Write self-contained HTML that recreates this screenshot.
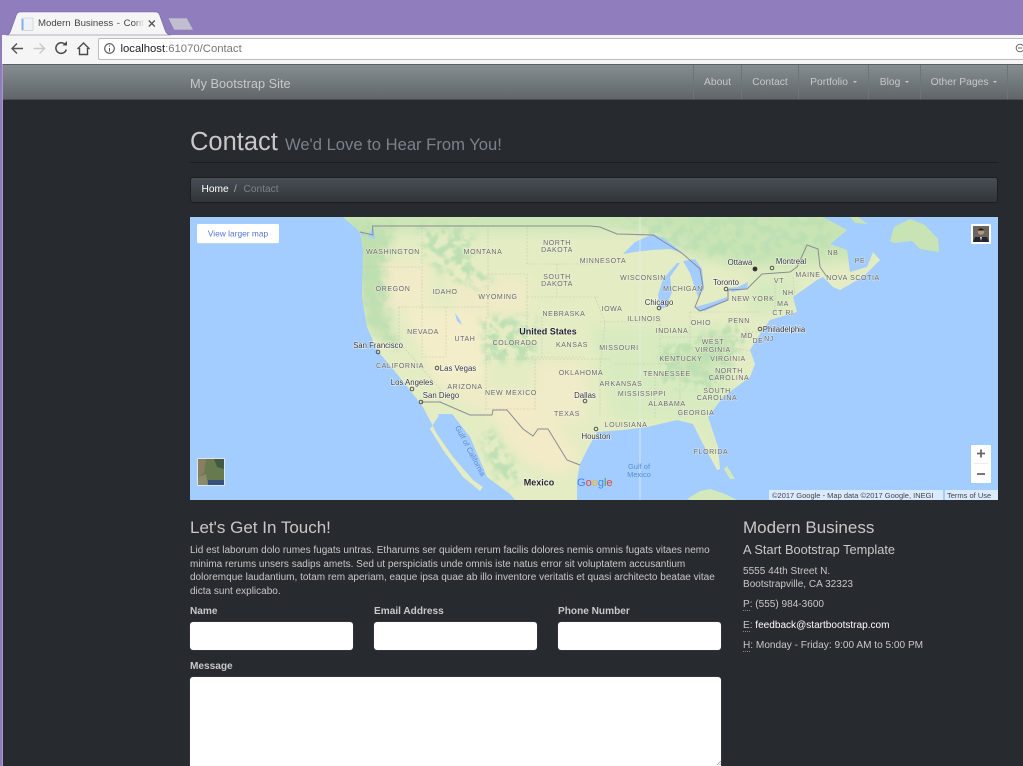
<!DOCTYPE html>
<html><head><meta charset="utf-8"><title>Modern Business - Contact</title>
<style>
html,body{margin:0;padding:0;width:1023px;height:766px;overflow:hidden;background:#272b30}
body{font-family:"Liberation Sans",Arial,sans-serif;position:relative}
#w{position:absolute;left:0;top:0;width:1023px;height:766px;overflow:hidden;filter:blur(.3px)}
.a{position:absolute;white-space:nowrap}
.l{color:#c8c8c8;font-size:10px;line-height:13.5px}
.lb{color:#c8c8c8;font-size:10.100px;font-weight:bold;line-height:13px}
.inp{position:absolute;background:#fff;border-radius:3px;box-sizing:border-box;box-shadow:0 0 0 .5px #3a3f44}
.nav{position:absolute;top:65px;height:34px;border-left:1px solid #6d7579;box-sizing:border-box;color:#c8c8c8;font-size:10.300px;line-height:35px;text-align:center}
.car{display:inline-block;width:0;height:0;border-left:2.2px solid transparent;border-right:2.2px solid transparent;border-top:2.2px solid #c8c8c8;margin-left:2px;vertical-align:middle}
abbr{text-decoration:none;border-bottom:1px dotted #888}
</style></head><body>
<div id="w">
<!-- browser frame -->
<div class="a" style="left:0;top:0;width:1023px;height:35px;background:#8f7dbd"></div>
<div class="a" style="left:0;top:35px;width:1023px;height:29px;background:#f5f5f5"></div>
<div class="a" style="left:0;top:35px;width:2px;height:731px;background:#8f7dbd"></div>
<div class="a" style="left:2px;top:64px;width:1px;height:702px;background:#a79ac8"></div>
<svg class="a" style="left:0;top:0" width="200" height="40">
<path d="M6 35 C9 35 10 33 11 30 L16 16 C17 13 18 12 21 12 L155 12 C158 12 159 13 160 16 L165 30 C166 33 168 35 171 35 Z" fill="#f5f5f5" stroke="#7667a5" stroke-width=".6"/>
<path d="M168 18 L187 18 L193.500 30 L174 30 Z" fill="#c3bdd0" stroke="#8a80a8" stroke-width=".6"/>
<rect x="22" y="18" width="11" height="12.500" fill="#eef1f5" stroke="#c8d0da" stroke-width=".7"/>
<rect x="21.500" y="19" width="2" height="11" fill="#7ab3e6"/>
<path d="M148.800 20.500 L154.800 26.500 M154.800 20.500 L148.800 26.500" stroke="#555" stroke-width="1.300"/>
</svg>
<div class="a" style="left:38px;top:17px;font-size:9.600px;color:#444;line-height:13px;width:106px;overflow:hidden;word-spacing:1px">Modern Business - Contact</div>
<div class="a" style="left:134px;top:14px;width:10px;height:18px;background:linear-gradient(90deg,rgba(245,245,245,0),#f5f5f5)"></div>
<div class="a" style="left:98px;top:38px;width:930px;height:22px;background:#fff;border:1px solid #bcbcbc;border-radius:2px;box-sizing:border-box"></div>
<svg class="a" style="left:0;top:36px" width="125" height="26" fill="none">
<path d="M23 12.500 H12.500 M17 7.500 L12 12.500 L17 17.500" stroke="#555" stroke-width="1.400"/>
<path d="M33.500 12.500 H44 M39.500 7.500 L44.500 12.500 L39.500 17.500" stroke="#c8c8c8" stroke-width="1.400"/>
<path d="M65.500 9 A5.300 5.300 0 1 0 66.300 13.500" stroke="#4a4a4a" stroke-width="1.500"/>
<path d="M62.500 9.500 L67 9.500 L67 5 Z" fill="#4a4a4a"/>
<path d="M77.500 13 L83.500 7 L89.500 13 M79.500 12 V18.500 H87.500 V12" stroke="#4a4a4a" stroke-width="1.400"/>
<circle cx="109.500" cy="12.500" r="4.800" stroke="#555" stroke-width="1.100"/>
<path d="M109.500 12 V15.500 M109.500 9.500 V10.600" stroke="#555" stroke-width="1.100"/>
</svg>
<div class="a" style="left:120.500px;top:41.500px;font-size:11.300px;line-height:15px;color:#222">localhost<span style="color:#777">:61070/Contact</span></div>
<svg class="a" style="left:1014px;top:42px" width="9" height="12" fill="none"><circle cx="6" cy="6" r="3.800" stroke="#666" stroke-width="1"/><path d="M4 6H8" stroke="#666"/></svg>

<!-- navbar -->
<div class="a" style="left:3px;top:64px;width:1020px;height:36px;background:linear-gradient(#868d91,#5f6568);border-top:1px solid #5a5f62;box-sizing:border-box;border-bottom:1px solid #4a4f52"></div>
<div class="a" style="left:190px;top:75.500px;font-size:12.750px;line-height:16px;color:#c8c8c8">My Bootstrap Site</div>
<div class="nav" style="left:693px;width:48px">About</div>
<div class="nav" style="left:741px;width:57px">Contact</div>
<div class="nav" style="left:798px;width:70px">Portfolio <span class="car"></span></div>
<div class="nav" style="left:868px;width:52px">Blog <span class="car"></span></div>
<div class="nav" style="left:920px;width:88px;border-right:1px solid #6d7579">Other Pages <span class="car"></span></div>

<!-- heading -->
<div class="a" style="left:190px;top:126px;font-size:25.500px;line-height:32px;color:#c8c8c8">Contact <span style="font-size:16.600px;color:#7a8288">We'd Love to Hear From You!</span></div>
<div class="a" style="left:190px;top:162px;width:808px;height:1px;background:#1c1e22"></div>
<!-- breadcrumb -->
<div class="a" style="left:190px;top:177px;width:808px;height:26px;box-sizing:border-box;border:1px solid #1c1e22;border-radius:3px;background:linear-gradient(#484e55,#3a3f44 60%,#313539)"></div>
<div class="a" style="left:201.500px;top:183px;font-size:10.200px;line-height:14px;color:#fff">Home</div>
<div class="a" style="left:234px;top:183px;font-size:10px;line-height:14px;color:#aaa">/</div>
<div class="a" style="left:243.500px;top:183px;font-size:10.200px;line-height:14px;color:#7a8288">Contact</div>

<!-- map -->
<svg class="a" style="left:190px;top:217px;font-family:'Liberation Sans',sans-serif" width="808" height="283" viewBox="0 0 808 283">
<defs>
<filter id="b" x="-20%" y="-20%" width="140%" height="140%"><feGaussianBlur stdDeviation="6"/></filter>
<filter id="m" x="-10%" y="-10%" width="120%" height="120%">
<feTurbulence type="fractalNoise" baseFrequency=".11" numOctaves="3" seed="7" result="n"/>
<feColorMatrix in="n" type="matrix" values="0 0 0 0 0 0 0 0 0 0 0 0 0 0 0 7 0 0 0 -3.100" result="t"/>
<feGaussianBlur in="SourceGraphic" stdDeviation="4" result="s"/>
<feComposite in="s" in2="t" operator="in" result="c"/>
<feGaussianBlur in="c" stdDeviation=".7"/>
</filter>
<clipPath id="land"><path d="M153 0 L160 6 L170 15 L173 33 L172 80 L177 110 L187 133 L207 157 L227 182 L233 190 L247 217 L263 240 L283 263 L293 270 L290 274 L273 260 L253 233 L240 212 L250 197 L262 197 L280 220 L297 260 L320 277 L325 283 L387 283 L387 263 L390 247 L397 233 L407 215 L433 213 L457 210 L487 203 L503 207 L513 227 L527 253 L530 252 L528 230 L518 200 L533 180 L560 160 L565 147 L560 133 L570 117 L580 103 L607 95 L603 80 L627 63 L633 60 L643 70 L650 73 L673 60 L690 43 L683 35 L677 50 L660 55 L657 33 L640 27 L657 13 L633 0 Z"/></clipPath>
</defs>
<rect width="808" height="283" fill="#a3ccff"/>
<g clip-path="url(#land)">
<rect width="808" height="283" fill="#e4ecc4"/>
<g filter="url(#b)">
<rect x="130" y="-10" width="570" height="24" fill="#cbe5b7"/>
<path d="M420 -5 H680 V40 L600 50 L560 50 L510 40 L480 25 Z" fill="#c8e4b5"/>
<path d="M195 45 H240 V90 H195 Z" fill="#f1ebc8"/>
<path d="M212 92 H296 V170 H250 Z" fill="#f4edca"/>
<path d="M255 60 H340 V98 H270 Z" fill="#efebc7"/>
<path d="M255 175 H345 L390 240 L370 260 L330 240 L300 195 Z" fill="#f3ebc8"/>
<path d="M345 145 H395 V205 H345 Z" fill="#f0ebc8"/>
<path d="M400 110 H540 V205 H425 Z" fill="#d8ebc0"/>
<path d="M560 60 L610 60 L600 90 L560 100 Z" fill="#d6eabf"/>
<path d="M505 205 L530 205 L530 250 Z" fill="#dcebc0"/>
<path d="M160 10 L200 10 L190 60 L195 95 L205 130 L178 110 L168 60 Z" fill="#c0deae"/>
<path d="M490 140 L540 115 L545 125 L515 160 L488 160 Z" fill="#c5e1b2"/>
</g>
<g filter="url(#m)" fill="#bde0b2">
<path d="M155 5 L205 5 L195 60 L200 100 L210 135 L178 110 L165 60 Z"/>
<path d="M225 8 L285 8 L280 45 L305 65 L285 72 L255 60 L240 45 Z"/>
<path d="M290 100 H345 V145 H295 Z"/>
<path d="M300 210 L335 262 L312 272 L290 225 Z"/>
<path d="M470 130 L545 105 L560 120 L525 172 L470 170 Z"/>
<path d="M420 0 H640 V30 L540 45 L470 25 Z"/>
</g>
</g>
<!-- islands -->
<path d="M660 0 H668 L678 7 L665 6 Z" fill="#c8e4b5"/>
<path d="M704 10 L720 2 L735 8 L748 22 L749 35 L730 32 L722 24 L704 26 L700 24 Z" fill="#c8e4b5"/>
<path d="M497 282 L510 274 L520 272 L535 277 L547 283 H500Z" fill="#d3e8bb"/>
<path d="M537 249 L545 262 L540 262 L534 252 Z" fill="#d3e8bb"/>
<!-- lakes -->
<g fill="#a3ccff">
<path d="M433 37 L445 25 L463 17 L475 22 L493 36 L480 32 L462 33 L445 35 Z"/>
<path d="M468 78 L473 62 L487 46 L490 46 L480 60 L482 75 L476 90 L470 92 Z"/>
<path d="M493 44 L505 42 L512 52 L514 72 L508 80 L503 65 L500 56 Z"/>
<path d="M505 90 L520 86 L537 80 L538 83 L515 94 L508 94 Z"/>
<path d="M538 71 L548 70 L558 65 L557 72 L542 75 Z"/>
<path d="M265 96 l5 7 l2 5 l-5 -4 z"/>
<path d="M248 197 L262 197 L280 220 L296 258 L287 256 L273 236 L257 216 Z"/>
<path d="M170 15 L178 20 L183 9 L185 22 L172 18 Z"/>
</g>
<rect x="449.500" y="0" width="1" height="283" fill="#e4edee" opacity=".75"/>
<!-- state lines -->
<g fill="none" stroke="#c4c8ae" stroke-width=".6" stroke-dasharray="2 1.500">
<path d="M337 10 V47 M337 47 H410 M337 80 H410 M298 57 H337 V80 M298 57 V100 M337 80 V140 H395 M352 100 V142 M232 90 H298 M208 90 L232 90 V140 H256 M256 90 V140 M296 100 V192 M296 142 H345 V192 H296 M345 142 H420 M209 90 V125 L250 172 L250 185 M172 50 H232 M232 10 V90 M298 10 V57 M367 47 V80 M405 80 L415 105 L410 150 V200 M410 105 H470 M425 147 H490 M470 100 V150 M500 95 V130 M500 95 H570 M555 115 H580 M465 160 V200 M490 160 V200 M510 165 L530 175 M472 120 H560 M535 130 L570 135 M585 60 V95 M603 60 L605 80"/>
</g>
<!-- country borders -->
<g fill="none" stroke="#8b8d90" stroke-width="1">
<path d="M170 15 L183 18 L182.500 9 H400 L410 10 L427 17 L463 18 L493 37 L510 52 L513 70 L505 90 L510 94 L538 83 L538 73 L557 72 L572 57 L600 55 L607 50 L617 28 L628 32 L630 50 L637 60"/>
<path d="M231 185 H250 L280 198 H302 L303 193 H317 L333 212 L343 219 L348 212 H358 L377 243 L390 248"/>
</g>
<!-- labels -->
<g font-size="7" fill="#6a6a6a" text-anchor="middle" letter-spacing=".6" style="paint-order:stroke" stroke="#f3f4e4" stroke-width="1" stroke-opacity=".6">
<text x="203" y="37">WASHINGTON</text><text x="293" y="37">MONTANA</text><text x="367" y="28">NORTH</text><text x="367" y="35">DAKOTA</text>
<text x="367" y="62">SOUTH</text><text x="367" y="69">DAKOTA</text><text x="413" y="46">MINNESOTA</text><text x="203" y="74">OREGON</text>
<text x="255" y="77">IDAHO</text><text x="308" y="82">WYOMING</text><text x="374" y="99">NEBRASKA</text><text x="233" y="117">NEVADA</text>
<text x="275" y="124">UTAH</text><text x="325" y="128">COLORADO</text><text x="382" y="130">KANSAS</text><text x="210" y="151">CALIFORNIA</text>
<text x="275" y="172">ARIZONA</text><text x="321" y="178">NEW MEXICO</text><text x="391" y="158">OKLAHOMA</text><text x="377" y="199">TEXAS</text>
<text x="453" y="63">WISCONSIN</text><text x="493" y="74">MICHIGAN</text><text x="422" y="94">IOWA</text><text x="454" y="104">ILLINOIS</text>
<text x="482" y="116">INDIANA</text><text x="511" y="108">OHIO</text><text x="549" y="106">PENN</text><text x="563" y="84">NEW YORK</text>
<text x="589" y="66">VT</text><text x="598" y="78">NH</text><text x="618" y="60">MAINE</text><text x="643" y="38">NB</text><text x="670" y="46">PE</text>
<text x="663" y="63">NOVA SCOTIA</text><text x="593" y="89">MA</text><text x="593" y="98">CT RI</text><text x="557" y="121">MD</text><text x="568" y="126">DE</text><text x="579" y="124">NJ</text>
<text x="523" y="127">WEST</text><text x="523" y="135">VIRGINIA</text><text x="429" y="133">MISSOURI</text><text x="491" y="144">KENTUCKY</text><text x="538" y="144">VIRGINIA</text>
<text x="477" y="159">TENNESSEE</text><text x="539" y="156">NORTH</text><text x="539" y="163">CAROLINA</text><text x="431" y="169">ARKANSAS</text>
<text x="452" y="179">MISSISSIPPI</text><text x="527" y="176">SOUTH</text><text x="527" y="183">CAROLINA</text><text x="477" y="189">ALABAMA</text>
<text x="506" y="198">GEORGIA</text><text x="436" y="210">LOUISIANA</text><text x="521" y="237">FLORIDA</text>
</g>
<g font-size="7.800" fill="#333" text-anchor="middle" style="paint-order:stroke" stroke="#fff" stroke-width="1.200" stroke-opacity=".7">
<text x="188" y="131">San Francisco</text><text x="268" y="154">Las Vegas</text><text x="222" y="168">Los Angeles</text><text x="251" y="181">San Diego</text>
<text x="395" y="181">Dallas</text><text x="406" y="222">Houston</text><text x="469" y="88">Chicago</text><text x="536" y="68">Toronto</text>
<text x="550" y="48">Ottawa</text><text x="601" y="47">Montreal</text><text x="594" y="115">Philadelphia</text>
<text x="358" y="117.500" font-size="9" font-weight="bold" fill="#222">United States</text>
<text x="349" y="268.500" font-size="9" font-weight="bold" fill="#222">Mexico</text>
</g>
<g fill="none" stroke="#444" stroke-width=".9">
<circle cx="188" cy="135" r="1.800"/><circle cx="247" cy="151" r="1.800"/><circle cx="222" cy="172" r="1.800"/><circle cx="231" cy="185" r="1.800"/>
<circle cx="395" cy="184" r="1.800"/><circle cx="406" cy="212" r="1.800"/><circle cx="469" cy="91" r="1.800"/><circle cx="536" cy="72" r="1.800"/>
<circle cx="582" cy="51" r="1.800"/><circle cx="570" cy="112" r="1.800"/>
</g>
<circle cx="565" cy="52" r="2.400" fill="#333"/>
<g font-size="7.500" fill="#5b8ecf" text-anchor="middle">
<text transform="translate(278 235) rotate(62)">Gulf of California</text>
<text x="449" y="252">Gulf of</text><text x="449" y="260">Mexico</text>
</g>
<!-- google -->
<text x="387" y="269" font-size="11"><tspan fill="#4285f4">G</tspan><tspan fill="#ea4335">o</tspan><tspan fill="#fbbc05">o</tspan><tspan fill="#4285f4">g</tspan><tspan fill="#34a853">l</tspan><tspan fill="#ea4335">e</tspan></text>
<!-- view larger -->
<rect x="7" y="7" width="82" height="19" fill="#c9d4e6" rx="1.500" transform="translate(0 .8)"/>
<rect x="7" y="7" width="82" height="19" fill="#fff" rx="1.500"/>
<text x="48" y="19.500" font-size="8.400" fill="#5a74d8" text-anchor="middle">View larger map</text>
<!-- avatar -->
<rect x="781" y="7" width="20" height="20" fill="#fff" rx="1"/>
<rect x="783" y="9" width="16" height="16" fill="#6a665e"/>
<circle cx="791" cy="14.500" r="3.300" fill="#b7957e"/><path d="M787.500 13.500 Q791 9 794.500 13.500Z" fill="#1e1c1a"/><path d="M783 25 L785 20 L797 20 L799 25Z" fill="#23272d"/><path d="M790 20 h2 l-1 4z" fill="#ddd"/>
<!-- thumb -->
<rect x="7" y="241" width="28" height="28" fill="#dfe6ee" rx="1"/>
<rect x="8" y="242" width="26" height="26" fill="#66794f"/>
<path d="M8 242 h8 l-2 14 l-6 4Z" fill="#8e8066" opacity=".85"/><path d="M24 242 h10 v10 l-7 -2Z" fill="#425a40"/><path d="M18 263 h16 v5 h-16Z" fill="#34527e"/><path d="M8 260 l8 -3 l2 11 h-10Z" fill="#8a8a6c"/>
<!-- zoom -->
<rect x="781" y="228" width="20" height="38" fill="#fff" rx="1"/>
<path d="M787 236.500 h8 M791 232.500 v8 M787 257 h8" stroke="#666" stroke-width="1.800"/>
<path d="M784 246.500 h14" stroke="#e6e6e6" stroke-width=".7"/>
<!-- attribution -->
<rect x="579" y="273" width="174" height="10" fill="#fff" opacity=".6"/>
<rect x="755" y="273" width="53" height="10" fill="#fff" opacity=".6"/>
<text x="582" y="281" font-size="7.500" fill="#444">©2017 Google - Map data ©2017 Google, INEGI</text>
<text x="757" y="281" font-size="7.500" fill="#444">Terms of Use</text>
</svg>

<!-- left column -->
<div class="a" style="left:190px;top:517px;font-size:17px;line-height:21px;color:#c8c8c8">Let's Get In Touch!</div>
<div class="a l" style="left:190px;top:544px">Lid est laborum dolo rumes fugats untras. Etharums ser quidem rerum facilis dolores nemis omnis fugats vitaes nemo<br>minima rerums unsers sadips amets. Sed ut perspiciatis unde omnis iste natus error sit voluptatem accusantium<br>doloremque laudantium, totam rem aperiam, eaque ipsa quae ab illo inventore veritatis et quasi architecto beatae vitae<br>dicta sunt explicabo.</div>
<div class="a lb" style="left:190px;top:605px">Name</div>
<div class="a lb" style="left:374px;top:605px">Email Address</div>
<div class="a lb" style="left:558px;top:605px">Phone Number</div>
<div class="inp" style="left:190px;top:622px;width:163px;height:27.500px"></div>
<div class="inp" style="left:374px;top:622px;width:163px;height:27.500px"></div>
<div class="inp" style="left:558px;top:622px;width:163px;height:27.500px"></div>
<div class="a lb" style="left:190px;top:660px">Message</div>
<div class="inp" style="left:190px;top:677px;width:531px;height:110px"></div>
<svg class="a" style="left:716px;top:760px" width="6" height="6"><path d="M1 5 L5 1 M3.500 5 L5 3.500" stroke="#999" stroke-width=".7"/></svg>

<!-- right column -->
<div class="a" style="left:743px;top:517px;font-size:17px;line-height:21px;color:#c8c8c8">Modern Business</div>
<div class="a" style="left:743px;top:542px;font-size:12.800px;line-height:16px;color:#c8c8c8">A Start Bootstrap Template</div>
<div class="a l" style="left:743px;top:564.500px;font-size:10.050px">5555 44th Street N.<br>Bootstrapville, CA 32323</div>
<div class="a l" style="left:743px;top:598px;font-size:10.050px"><abbr>P</abbr>: (555) 984-3600</div>
<div class="a l" style="left:743px;top:619px;font-size:10.050px"><abbr>E</abbr>: <span style="color:#fff">feedback@startbootstrap.com</span></div>
<div class="a l" style="left:743px;top:639px;font-size:10.100px"><abbr>H</abbr>: Monday - Friday: 9:00 AM to 5:00 PM</div>
</div>
</body></html>
